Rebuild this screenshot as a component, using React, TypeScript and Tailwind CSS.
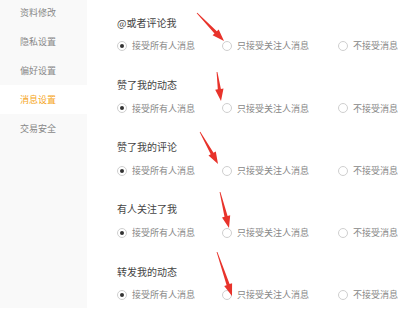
import React from "react";

const font = { fontFamily: '"Noto Sans CJK SC", "Noto Sans", sans-serif' };

const sections = ["@或者评论我", "赞了我的动态", "赞了我的评论", "有人关注了我", "转发我的动态"];
const menu = ["资料修改", "隐私设置", "偏好设置", "消息设置", "交易安全"];

function Radio({ checked }: { checked?: boolean }) {
  return (
    <span className="w-[10px] h-[10px] rounded-full border border-[#cfcfcf] bg-white flex items-center justify-center shrink-0">
      {checked && <span className="w-[4px] h-[4px] rounded-full bg-[#333]" />}
    </span>
  );
}

const arrows: [number, number, number, number][] = [
  [197, 13, 224, 41],
  [217, 72, 221, 101],
  [200, 132, 218, 164],
  [220, 192, 229, 228],
  [217, 252, 232, 296],
];

function arrowPoints(x1: number, y1: number, x2: number, y2: number) {
  const dx = x2 - x1, dy = y2 - y1;
  const len = Math.hypot(dx, dy);
  const ux = dx / len, uy = dy / len;
  const nx = -uy, ny = ux;
  const head = 12;
  const bx = x2 - ux * head, by = y2 - uy * head;
  const p = (x: number, y: number) => `${x.toFixed(1)},${y.toFixed(1)}`;
  return [
    p(x1 + nx * 0.4, y1 + ny * 0.4),
    p(bx + nx * 1.6, by + ny * 1.6),
    p(bx + nx * 4.2, by + ny * 4.2),
    p(x2, y2),
    p(bx - nx * 4.2, by - ny * 4.2),
    p(bx - nx * 1.6, by - ny * 1.6),
    p(x1 - nx * 0.4, y1 - ny * 0.4),
  ].join(" ");
}

export default function App() {
  return (
    <div className="relative w-[413px] h-[310px] overflow-hidden bg-white flex" style={font}>
      <div className="w-[87px] h-full bg-[#f9f9f9] flex flex-col -mt-[2px] shrink-0">
        {menu.map((m) => (
          <div
            key={m}
            className={`h-[29px] shrink-0 flex items-center pl-[20px] text-[9px] ${
              m === "消息设置" ? "bg-white text-[#f5a623]" : "text-[#888]"
            }`}
          >
            {m}
          </div>
        ))}
      </div>
      <div className="flex flex-col pl-[30px] pt-[14px]">
        {sections.map((s) => (
          <div key={s} className="h-[62.3px] shrink-0 flex flex-col">
            <div className="h-[16px] flex items-center text-[10px] text-[#444]">{s}</div>
            <div className="h-[8px]" />
            <div className="h-[16px] flex items-center text-[9px] text-[#888]">
              <div className="w-[105px] flex items-center gap-[5px]">
                <Radio checked />
                <span>接受所有人消息</span>
              </div>
              <div className="w-[116px] flex items-center gap-[5px]">
                <Radio />
                <span>只接受关注人消息</span>
              </div>
              <div className="flex items-center gap-[5px]">
                <Radio />
                <span>不接受消息</span>
              </div>
            </div>
          </div>
        ))}
      </div>
      <svg className="absolute inset-0 pointer-events-none" width="413" height="310" viewBox="0 0 413 310">
        {arrows.map((a, i) => (
          <polygon key={i} points={arrowPoints(a[0], a[1], a[2], a[3])} fill="#e8332b" />
        ))}
      </svg>
    </div>
  );
}
